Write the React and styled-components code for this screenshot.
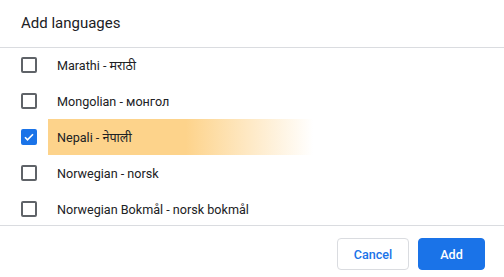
import React from 'react'
import styled, { createGlobalStyle } from 'styled-components'

const GlobalStyle = createGlobalStyle`
  html, body { margin: 0; padding: 0; background: #ffffff; }
  body { font-family: Roboto, "Noto Sans", "Liberation Sans", sans-serif; color: #202124; }
`

const languages = [
  { name: 'Marathi - मराठी' },
  { name: 'Mongolian - монгол' },
  { name: 'Nepali - नेपाली', checked: true, highlight: true },
  { name: 'Norwegian - norsk' },
  { name: 'Norwegian Bokmål - norsk bokmål' },
]

function App() {
  return (
    <Dialog>
      <GlobalStyle />
      <Header>Add languages</Header>
      <List>
        <Inner>
          {languages.map((lang) => (
            <Row key={lang.name}>
              <Box $checked={lang.checked}>
                {lang.checked && (
                  <svg width="12" height="12" viewBox="0 0 24 24">
                    <path d="M4 12.5l5 5L20 6.5" fill="none" stroke="#fff" strokeWidth="3.4" />
                  </svg>
                )}
              </Box>
              <Label $highlight={lang.highlight}>{lang.name}</Label>
            </Row>
          ))}
        </Inner>
      </List>
      <Footer>
        <Button $w={72}>Cancel</Button>
        <Button $w={67} $primary>Add</Button>
      </Footer>
    </Dialog>
  )
}

export default App

const Dialog = styled.div`
  width: 504px;
  height: 277px;
  display: flex;
  flex-direction: column;
  overflow: hidden;
`

const Header = styled.div`
  height: 48px;
  box-sizing: border-box;
  padding: 14px 21px 0;
  font-size: 15px;
  border-bottom: 1px solid #dadce0;
`

const List = styled.div`
  height: 177px;
  overflow: hidden;
`

const Inner = styled.div`
  margin-top: -1px;
`

const Row = styled.div`
  display: flex;
  align-items: center;
  height: 36px;
  padding-left: 21px;
`

const Box = styled.span`
  width: 16px;
  height: 16px;
  box-sizing: border-box;
  border-radius: 2px;
  border: 2px solid ${(p) => (p.$checked ? '#1a73e8' : '#5f6368')};
  background: ${(p) => (p.$checked ? '#1a73e8' : 'transparent')};
  display: flex;
  align-items: center;
  justify-content: center;
  margin-right: 11px;
`

const Label = styled.span`
  display: flex;
  align-items: center;
  height: 36px;
  width: 265px;
  box-sizing: border-box;
  padding-left: 9px;
  font-size: 12.6px;
  background: ${(p) =>
    p.$highlight ? 'linear-gradient(to right, #fdd38b 0%, #fdd38b 52%, rgba(253, 211, 139, 0) 100%)' : 'none'};
`

const Footer = styled.div`
  border-top: 1px solid #dadce0;
  display: flex;
  justify-content: flex-end;
  gap: 9px;
  padding: 12px 19px 0;
`

const Button = styled.button`
  width: ${(p) => p.$w}px;
  height: 32px;
  box-sizing: border-box;
  padding: 0;
  border-radius: 4px;
  border: 1px solid ${(p) => (p.$primary ? '#1a73e8' : '#dadce0')};
  background: ${(p) => (p.$primary ? '#1a73e8' : '#ffffff')};
  color: ${(p) => (p.$primary ? '#ffffff' : '#1a73e8')};
  font-family: Roboto, "Liberation Sans", sans-serif;
  font-size: 12.6px;
  font-weight: 500;
`
